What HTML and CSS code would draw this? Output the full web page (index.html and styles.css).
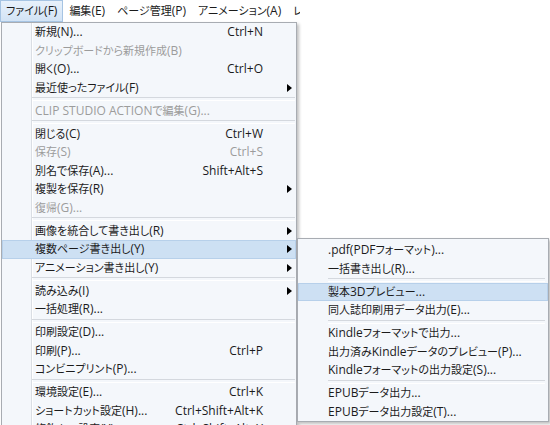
FILE: index.html
```html
<!DOCTYPE html>
<html lang="ja">
  <head>
    <meta charset="utf-8" />
    <meta name="viewport" content="width=device-width, initial-scale=1.0" />

    <title>ファイル</title>

    <link rel="stylesheet" href="styles.css">
  </head>
  <body>
    <div class="screen">
      <div class="menubar">
        <div class="menubar-item open">ファイル<span class="en">(F)</span></div>
        <div class="menubar-item">編集<span class="en">(E)</span></div>
        <div class="menubar-item">ページ管理<span class="en">(P)</span></div>
        <div class="menubar-item">アニメーション<span class="en">(A)</span></div>
        <div class="menubar-item">レイヤー<span class="en">(L)</span></div>
      </div>

      <!-- File menu -->
      <div class="menu menu-main">
        <div class="item"><span>新規<span class="en">(N)...</span></span><span class="key">Ctrl+N</span></div>
        <div class="item disabled"><span>クリップボードから新規作成<span class="en">(B)</span></span></div>
        <div class="item"><span>開く<span class="en">(O)...</span></span><span class="key">Ctrl+O</span></div>
        <div class="item"><span>最近使ったファイル<span class="en">(F)</span></span><span class="key"></span><svg class="arrow" width="5" height="8" viewBox="0 0 5 8"><path d="M0 0L5 4L0 8Z" /></svg></div>
        <div class="sep"></div>
        <div class="item disabled"><span><span class="en">CLIP STUDIO ACTION</span>で編集<span class="en">(G)...</span></span></div>
        <div class="sep"></div>
        <div class="item"><span>閉じる<span class="en">(C)</span></span><span class="key">Ctrl+W</span></div>
        <div class="item disabled"><span>保存<span class="en">(S)</span></span><span class="key">Ctrl+S</span></div>
        <div class="item"><span>別名で保存<span class="en">(A)...</span></span><span class="key">Shift+Alt+S</span></div>
        <div class="item"><span>複製を保存<span class="en">(R)</span></span><span class="key"></span><svg class="arrow" width="5" height="8" viewBox="0 0 5 8"><path d="M0 0L5 4L0 8Z" /></svg></div>
        <div class="item disabled"><span>復帰<span class="en">(G)...</span></span></div>
        <div class="sep"></div>
        <div class="item"><span>画像を統合して書き出し<span class="en">(R)</span></span><span class="key"></span><svg class="arrow" width="5" height="8" viewBox="0 0 5 8"><path d="M0 0L5 4L0 8Z" /></svg></div>
        <div class="item active"><span>複数ページ書き出し<span class="en">(Y)</span></span><span class="key"></span><svg class="arrow" width="5" height="8" viewBox="0 0 5 8"><path d="M0 0L5 4L0 8Z" /></svg></div>
        <div class="item"><span>アニメーション書き出し<span class="en">(Y)</span></span><span class="key"></span><svg class="arrow" width="5" height="8" viewBox="0 0 5 8"><path d="M0 0L5 4L0 8Z" /></svg></div>
        <div class="sep"></div>
        <div class="item"><span>読み込み<span class="en">(I)</span></span><span class="key"></span><svg class="arrow" width="5" height="8" viewBox="0 0 5 8"><path d="M0 0L5 4L0 8Z" /></svg></div>
        <div class="item"><span>一括処理<span class="en">(R)...</span></span></div>
        <div class="sep"></div>
        <div class="item"><span>印刷設定<span class="en">(D)...</span></span></div>
        <div class="item"><span>印刷<span class="en">(P)...</span></span><span class="key">Ctrl+P</span></div>
        <div class="item"><span>コンビニプリント<span class="en">(P)...</span></span></div>
        <div class="sep"></div>
        <div class="item"><span>環境設定<span class="en">(E)...</span></span><span class="key">Ctrl+K</span></div>
        <div class="item"><span>ショートカット設定<span class="en">(H)...</span></span><span class="key">Ctrl+Shift+Alt+K</span></div>
        <div class="item"><span>修飾キー設定<span class="en">(Y)...</span></span><span class="key">Ctrl+Shift+Alt+Y</span></div>
      </div>

      <!-- 複数ページ書き出し submenu -->
      <div class="menu menu-sub">
        <div class="item"><span><span class="en">.pdf(PDF</span>フォーマット<span class="en">)...</span></span></div>
        <div class="item"><span>一括書き出し<span class="en">(R)...</span></span></div>
        <div class="sep"></div>
        <div class="item active"><span>製本<span class="en">3D</span>プレビュー<span class="en">...</span></span></div>
        <div class="item"><span>同人誌印刷用データ出力<span class="en">(E)...</span></span></div>
        <div class="sep"></div>
        <div class="item"><span><span class="en">Kindle</span>フォーマットで出力<span class="en">...</span></span></div>
        <div class="item"><span>出力済み<span class="en">Kindle</span>データのプレビュー<span class="en">(P)...</span></span></div>
        <div class="item"><span><span class="en">Kindle</span>フォーマットの出力設定<span class="en">(S)...</span></span></div>
        <div class="sep"></div>
        <div class="item"><span><span class="en">EPUB</span>データ出力<span class="en">...</span></span></div>
        <div class="item"><span><span class="en">EPUB</span>データ出力設定<span class="en">(T)...</span></span></div>
      </div>
    </div>
  </body>
</html>
```

FILE: styles.css
```css
* {
  box-sizing: border-box;
}

body {
  margin: 0;
  background: #fff;
  font-family: "Open Sans", "Noto Sans CJK JP", sans-serif;
  font-size: 11px;
  font-feature-settings: "palt";
  color: #1b1b1b;
}

/* latin runs sit a bit larger than the kana/kanji */
.en,
.key {
  font-size: 12px;
}

.screen {
  position: relative;
  width: 550px;
  height: 425px;
  overflow: hidden;
}

/* top menu bar */
.menubar {
  display: flex;
  width: 300px;
  height: 22px;
  overflow: hidden;
  background: #fff;
  white-space: nowrap;
}

.menubar-item {
  padding: 0 5px;
  line-height: 20px;
  border: 1px solid transparent;
}

.menubar-item.open {
  background: linear-gradient(#e8f1fb, #d2e3f5);
  border-color: #a6c4e3;
}

/* dropdown menus */
.menu {
  background: #f4f7fb;
  border: 1px solid #a8acb2;
  box-shadow: 2px 2px 3px rgba(0, 0, 0, 0.25);
}

.menu-main {
  width: 296px;
  margin-left: 1px;
  /* icon gutter divider */
  background-image: linear-gradient(
    to right,
    transparent 29px,
    #dadee4 29px,
    #dadee4 30px,
    #fff 30px,
    #fff 31px,
    transparent 31px
  );
}

.menu-sub {
  position: absolute;
  left: 297px;
  top: 238px;
  width: 252px;
  padding-top: 2px;
}

.item {
  display: grid;
  grid-template-columns: 1fr auto 33px;
  align-items: center;
  height: 18.5px;
  line-height: 18.5px;
  padding-left: 33px;
  white-space: nowrap;
}

.menu-sub .item {
  padding-left: 30px;
}

.item.disabled {
  color: #9c9c9c;
}

.item.active {
  background: #cde0f3;
  box-shadow: inset 0 0 0 1px #b7d0ea;
}

.arrow {
  justify-self: end;
  margin-right: 4px;
  fill: #000;
}

.sep {
  display: flex;
  align-items: center;
  height: 4.5px;
  margin: 0 1px 0 30px;
}

.sep::before {
  content: "";
  flex: 1;
  height: 2px;
  border-top: 1px solid #d4d8de;
  border-bottom: 1px solid #fff;
}

.menu-sub .sep {
  margin-left: 30px;
  margin-right: 3px;
}
```
